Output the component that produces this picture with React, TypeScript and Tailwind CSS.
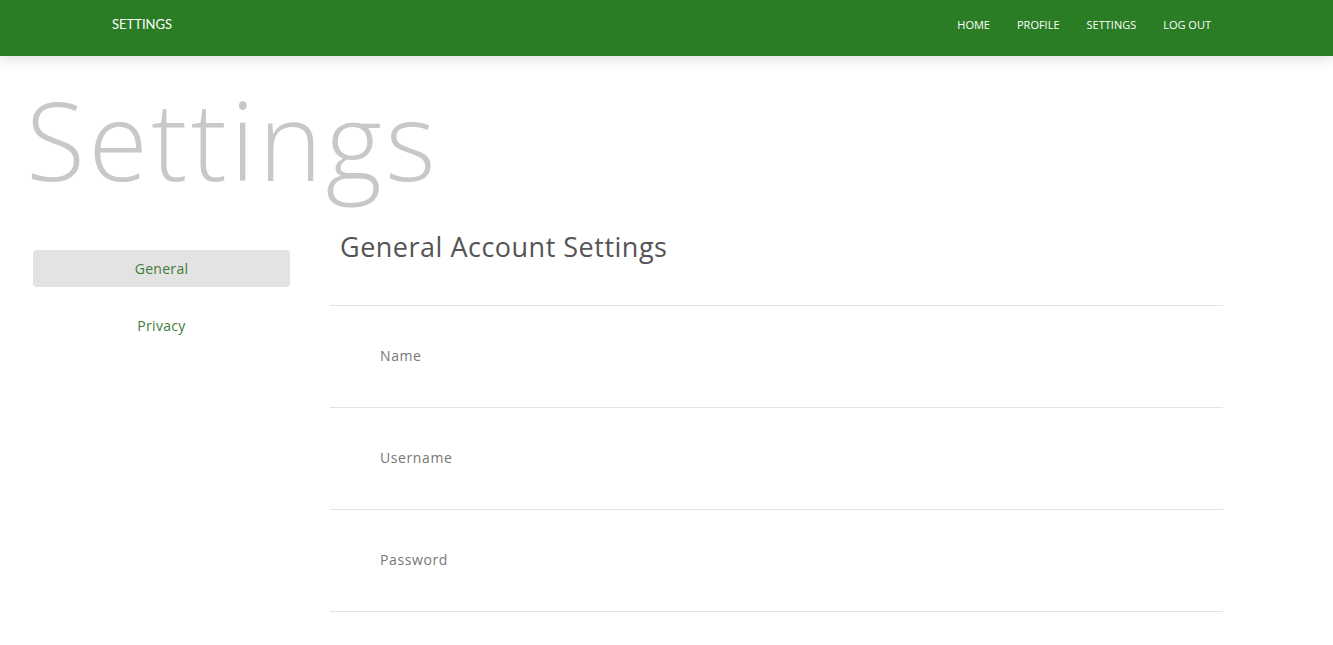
import React from 'react';

const navItems = ['HOME', 'PROFILE', 'SETTINGS', 'LOG OUT'];
const fields = ['Name', 'Username', 'Password'];

export default function App() {
  return (
    <div className="min-h-screen bg-white" style={{ fontFamily: '"Open Sans", sans-serif' }}>
      <header className="h-14 bg-[#2a7d24] shadow-[0_4px_12px_rgba(0,0,0,0.12)] flex items-center justify-between pl-[112px] pr-[122px] pb-[7px]">
        <span className="text-[13px] text-white" style={{ fontFamily: 'Lato, sans-serif' }}>SETTINGS</span>
        <nav className="flex gap-[27px] text-[11px] text-white">
          {navItems.map((item) => (
            <a key={item} href="#" className="leading-none">{item}</a>
          ))}
        </nav>
      </header>

      <h1 className="pl-[26px] pt-[20px] text-[108px] leading-[128px] font-light tracking-[3.5px] text-[#c8c8c8]">Settings</h1>

      <div className="flex mt-[25px]">
        <aside className="w-[330px] pl-[33px] pr-[40px] pt-[21px] flex flex-col gap-[20px]">
          <button className="h-[37px] rounded bg-[#e3e3e3] text-[14px] tracking-[0.3px] text-[#3f7a38]">General</button>
          <button className="h-[37px] text-[14px] tracking-[0.3px] text-[#3f7a38]">Privacy</button>
        </aside>

        <main className="w-[893px]">
          <h2 className="pl-[10px] text-[27px] leading-[36px] tracking-[0.5px] text-[#555] pb-[40px]">General Account Settings</h2>
          <div className="border-t border-[#e2e2e2]">
            {fields.map((f) => (
              <div key={f} className="h-[102px] border-b border-[#e2e2e2] pl-[50px] pt-[39px] text-[14px] tracking-[0.6px] text-[#777]">
                {f}
              </div>
            ))}
          </div>
        </main>
      </div>
    </div>
  );
}
